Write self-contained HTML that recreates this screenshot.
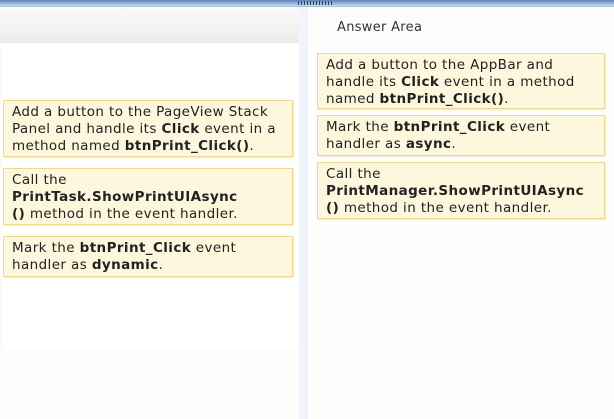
<!DOCTYPE html>
<html><head><style>
body{margin:0;width:614px;height:419px;overflow:hidden;background:#fefefe;font-family:"DejaVu Sans","Liberation Sans",sans-serif;font-size:13.5px;color:#222;position:relative}
.top{position:absolute;left:0;top:0;width:614px;height:6px;background:linear-gradient(#5d83b5,#c8daf0);border-bottom:1px solid #a9c1e0}
.grip{position:absolute;left:298px;top:1px;width:36px;height:4px;background:repeating-linear-gradient(90deg,#345 0 1px,transparent 1px 3px)}
.lh{position:absolute;left:0;top:7px;width:299px;height:36px;background:linear-gradient(#fafafa,#ececec)}
.lp{position:absolute;left:0;top:43px;width:297px;height:308px;background:#fff;border-bottom:1px solid #fbfaee;border-left:2px solid #fdfcf0}
.div{position:absolute;left:299px;top:7px;width:9px;height:412px;background:#eef5fd}
.rh{position:absolute;left:308px;top:7px;width:306px;height:36px;background:#fdfdfd}
.aa{position:absolute;left:337px;top:20px;font-size:13px;color:#333;letter-spacing:.3px}
.b{position:absolute;box-sizing:border-box;background:#fdf7de;border:1px solid #eed88e;padding:3px 8px 0;line-height:17px;box-shadow:1px 1px 1px #f1ead0;letter-spacing:.4px;white-space:nowrap}
</style></head><body>
<div class="top"></div><div class="grip"></div>
<div class="lh"></div><div class="lp"></div>
<div class="div"></div><div class="rh"></div>
<div class="aa">Answer Area</div>
<div class="b" style="left:3px;top:100px;width:290px;height:57px">Add a button to the PageView Stack<br>Panel and handle its <b>Click</b> event in a<br>method named <b>btnPrint_Click()</b>.</div>
<div class="b" style="left:3px;top:168px;width:290px;height:57px">Call the<br><b>PrintTask.ShowPrintUIAsync<br>()</b> method in the event handler.</div>
<div class="b" style="left:3px;top:236px;width:290px;height:41px">Mark the <b>btnPrint_Click</b> event<br>handler as <b>dynamic</b>.</div>
<div class="b" style="left:317px;top:53px;width:288px;height:56px">Add a button to the AppBar and<br>handle its <b>Click</b> event in a method<br>named <b>btnPrint_Click()</b>.</div>
<div class="b" style="left:317px;top:115px;width:288px;height:41px">Mark the <b>btnPrint_Click</b> event<br>handler as <b>async</b>.</div>
<div class="b" style="left:317px;top:162px;width:288px;height:57px">Call the<br><b>PrintManager.ShowPrintUIAsync<br>()</b> method in the event handler.</div>
</body></html>
